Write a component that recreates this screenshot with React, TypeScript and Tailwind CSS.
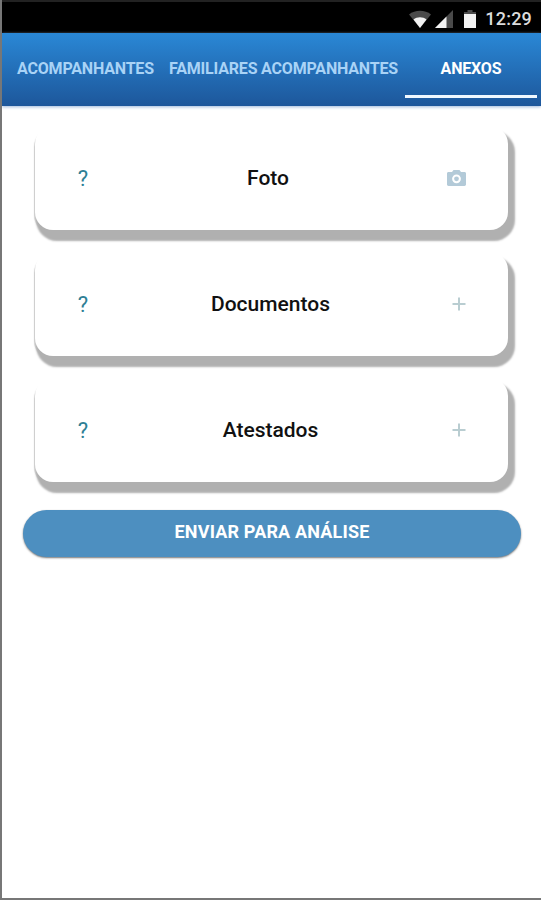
import type { ReactNode } from "react";

interface Anexo {
  titulo: string;
  icone: ReactNode;
  largo?: boolean;
}

function IconeCamera() {
  return (
    <svg width="19" height="16" viewBox="0 0 19 16" fill="#b3cad8" className="mr-[7px]">
      <path
        fillRule="evenodd"
        d="M6.500 0 5 2H1.500C.7 2 0 2.600 0 3.400v11.200c0 .8.7 1.400 1.500 1.400h16c.8 0 1.500-.6 1.500-1.400V3.400c0-.8-.7-1.400-1.500-1.400H14l-1.500-2zm3 13.200a4.400 4.400 0 1 1 0-8.800 4.400 4.400 0 0 1 0 8.800z"
      />
      <circle cx="9.500" cy="8.800" r="2.400" />
    </svg>
  );
}

function IconeMais() {
  return (
    <svg width="14" height="14" viewBox="0 0 14 14" stroke="#b9cdd1" strokeWidth="2" className="mr-[2px]">
      <path d="M7 .5v13M.5 7h13" />
    </svg>
  );
}

const anexos: Anexo[] = [
  { titulo: "Foto", icone: <IconeCamera />, largo: true },
  { titulo: "Documentos", icone: <IconeMais /> },
  { titulo: "Atestados", icone: <IconeMais /> },
];

function BarraStatus() {
  return (
    <div className="flex h-[33px] items-center justify-end border-t-2 border-[#222] bg-black pt-[3px] pr-[9px]">
      <svg width="22" height="18" viewBox="0 0 22 18" className="mr-1">
        <path d="M0 4.500C6-.5 16-.5 22 4.500L11 18z" fill="#4a4a4a" />
        <path d="M4.500 9.500C8 6.500 14 6.500 17.500 9.500L11 18z" fill="#f2f2f2" />
      </svg>
      <svg width="18" height="18" viewBox="0 0 18 18" className="mr-[11px]">
        <path d="M18 0v18H0z" fill="#4a4a4a" />
        <path d="M11.500 6.500V18H0z" fill="#f2f2f2" />
      </svg>
      <svg width="12" height="18" viewBox="0 0 12 18" className="mr-[9px]">
        <path d="M3.500 0h5v2H12v3H0V2h3.500z" fill="#4a4a4a" />
        <path d="M0 4h12v14H0z" fill="#f2f2f2" />
      </svg>
      <span className="text-[18px] leading-none font-medium tracking-[0.2px] text-[#dcdcdc]">12:29</span>
    </div>
  );
}

function Abas() {
  return (
    <nav className="flex h-[73px] bg-linear-to-b from-[#2a88d6] to-[#1d579b] pr-1 text-[16px] font-bold tracking-[-0.18px] whitespace-nowrap text-[#a9d3f6] shadow-[0_1px_3px_#9db8dc]">
      <div className="flex w-[167px] items-center pb-0.5 pl-[15px]">ACOMPANHANTES</div>
      <div className="flex flex-1 items-center pb-0.5">FAMILIARES ACOMPANHANTES</div>
      <div className="mb-2 flex w-[132px] items-center justify-center border-b-[3px] border-[#f0f8ff] pt-[9px] text-white">
        ANEXOS
      </div>
    </nav>
  );
}

function CartaoAnexo({ titulo, icone, largo }: Anexo) {
  return (
    <div className="grid h-[104px] grid-cols-[96px_1fr_96px] items-center rounded-[18px] bg-white shadow-[4px_8px_2px_3px_#b0b0b0,-0.5px_3px_1px_#ccc]">
      <span className="text-center text-[22px] text-[#2f7f96]">?</span>
      <span
        className={`pt-[2px] text-center text-[21px] font-medium text-[#111] ${largo ? "pr-[7px]" : "pr-[2px]"}`}
      >
        {titulo}
      </span>
      <span className="flex w-[96px] justify-center">{icone}</span>
    </div>
  );
}

export default function App() {
  return (
    <div className="h-[900px] w-[541px] overflow-hidden border-b-2 border-l-2 border-[#777] bg-white font-[Roboto,sans-serif]">
      <BarraStatus />
      <Abas />
      <main className="pt-5 pr-5 pl-[21px]">
        <div className="space-y-[22px] pr-[13px] pl-3">
          {anexos.map((anexo) => (
            <CartaoAnexo key={anexo.titulo} {...anexo} />
          ))}
        </div>
        <button className="mt-7 h-[47px] w-full rounded-full bg-[#4d8fc0] pb-[5px] text-[18px] font-bold tracking-[0.17px] text-white shadow-[0_1px_2px_#777]">
          ENVIAR PARA ANÁLISE
        </button>
      </main>
    </div>
  );
}
